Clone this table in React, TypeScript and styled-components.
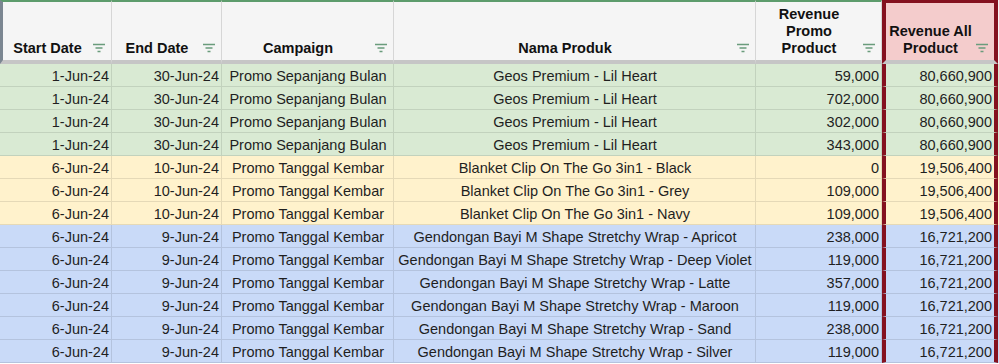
import React from 'react';
import styled, { createGlobalStyle, css } from 'styled-components';

const GlobalStyle = createGlobalStyle`
  html, body {
    margin: 0;
    padding: 0;
    background: #ffffff;
    overflow: hidden;
  }
  body {
    font-family: "Liberation Sans", Arial, sans-serif;
    color: #1f1f1f;
  }
`;

const RED = '#84111f';
const COLS = '112px 110px 172px 362px 126px 116px 1fr';

type Tone = 'green' | 'yellow' | 'blue';

const toneBg: Record<Tone, string> = {
  green: '#d9ead3',
  yellow: '#fff2cc',
  blue: '#c9daf8',
};

interface SaleRow {
  start: string;
  end: string;
  campaign: string;
  produk: string;
  promo: string;
  all: string;
  tone: Tone;
}

const Sheet = styled.div`
  width: 999px;
  height: 364px;
  overflow: hidden;
`;

const Row = styled.div`
  display: grid;
  grid-template-columns: ${COLS};
`;

const HeaderCell = styled.div<{ $accent?: boolean; $first?: boolean }>`
  box-sizing: border-box;
  height: 64px;
  display: flex;
  align-items: flex-end;
  padding-bottom: 3px;
  background: #f5f5f5;
  border-top: 2px solid #5d9c6c;
  border-right: 1px solid #d6d6d6;
  border-bottom: 4px solid #c6c6c6;
  ${(p) =>
    p.$first &&
    css`
      border-left: 3px solid #7b8691;
    `}
  ${(p) =>
    p.$accent &&
    css`
      background: #f4cccc;
      border-top: 3px solid ${RED};
      border-left: 4px solid ${RED};
      border-right: 4px solid ${RED};
    `}
`;

const HeaderLabel = styled.div`
  flex: 1;
  text-align: center;
  font-weight: 700;
  font-size: 14.5px;
  line-height: 17px;
  color: #111;
`;

const FilterIcon = styled.svg`
  flex: none;
  width: 14px;
  height: 10px;
  margin: 0 5px 4px 0;
`;

const Cell = styled.div<{ $tone: Tone; $align: 'left' | 'center' | 'right'; $accent?: boolean }>`
  box-sizing: border-box;
  height: 23px;
  line-height: 20px;
  padding: 2px 2px 0 3px;
  font-size: 14.5px;
  white-space: nowrap;
  overflow: hidden;
  text-align: ${(p) => p.$align};
  background: ${(p) => toneBg[p.$tone]};
  border-right: 1px solid rgba(0, 0, 0, 0.1);
  border-bottom: 1px solid rgba(0, 0, 0, 0.1);
  ${(p) =>
    p.$accent &&
    css`
      border-left: 4px solid ${RED};
      border-right: 4px solid ${RED};
    `}
`;

const Filler = styled.div<{ $tone?: Tone }>`
  background: ${(p) => (p.$tone ? toneBg[p.$tone] : '#f5f5f5')};
`;

const Filter = () => (
  <FilterIcon viewBox="0 0 14 10">
    <path d="M1 1.5h12M3.5 5h7M5.5 8.5h3" stroke="#6a9c7c" strokeWidth="1.3" fill="none" />
  </FilterIcon>
);

const headers = [
  ['Start Date'],
  ['End Date'],
  ['Campaign'],
  ['Nama Produk'],
  ['Revenue', 'Promo', 'Product'],
  ['Revenue All', 'Product'],
];

const geos = 'Geos Premium - Lil Heart';
const blanket = 'Blanket Clip On The Go 3in1 - ';
const wrap = 'Gendongan Bayi M Shape Stretchy Wrap - ';

const rows: SaleRow[] = [
  { start: '1-Jun-24', end: '30-Jun-24', campaign: 'Promo Sepanjang Bulan', produk: geos, promo: '59,000', all: '80,660,900', tone: 'green' },
  { start: '1-Jun-24', end: '30-Jun-24', campaign: 'Promo Sepanjang Bulan', produk: geos, promo: '702,000', all: '80,660,900', tone: 'green' },
  { start: '1-Jun-24', end: '30-Jun-24', campaign: 'Promo Sepanjang Bulan', produk: geos, promo: '302,000', all: '80,660,900', tone: 'green' },
  { start: '1-Jun-24', end: '30-Jun-24', campaign: 'Promo Sepanjang Bulan', produk: geos, promo: '343,000', all: '80,660,900', tone: 'green' },
  { start: '6-Jun-24', end: '10-Jun-24', campaign: 'Promo Tanggal Kembar', produk: blanket + 'Black', promo: '0', all: '19,506,400', tone: 'yellow' },
  { start: '6-Jun-24', end: '10-Jun-24', campaign: 'Promo Tanggal Kembar', produk: blanket + 'Grey', promo: '109,000', all: '19,506,400', tone: 'yellow' },
  { start: '6-Jun-24', end: '10-Jun-24', campaign: 'Promo Tanggal Kembar', produk: blanket + 'Navy', promo: '109,000', all: '19,506,400', tone: 'yellow' },
  { start: '6-Jun-24', end: '9-Jun-24', campaign: 'Promo Tanggal Kembar', produk: wrap + 'Apricot', promo: '238,000', all: '16,721,200', tone: 'blue' },
  { start: '6-Jun-24', end: '9-Jun-24', campaign: 'Promo Tanggal Kembar', produk: wrap + 'Deep Violet', promo: '119,000', all: '16,721,200', tone: 'blue' },
  { start: '6-Jun-24', end: '9-Jun-24', campaign: 'Promo Tanggal Kembar', produk: wrap + 'Latte', promo: '357,000', all: '16,721,200', tone: 'blue' },
  { start: '6-Jun-24', end: '9-Jun-24', campaign: 'Promo Tanggal Kembar', produk: wrap + 'Maroon', promo: '119,000', all: '16,721,200', tone: 'blue' },
  { start: '6-Jun-24', end: '9-Jun-24', campaign: 'Promo Tanggal Kembar', produk: wrap + 'Sand', promo: '238,000', all: '16,721,200', tone: 'blue' },
  { start: '6-Jun-24', end: '9-Jun-24', campaign: 'Promo Tanggal Kembar', produk: wrap + 'Silver', promo: '119,000', all: '16,721,200', tone: 'blue' },
];

export default function App() {
  return (
    <>
      <GlobalStyle />
      <Sheet>
        <Row>
          {headers.map((lines, i) => (
            <HeaderCell key={i} $first={i === 0} $accent={i === 5}>
              <HeaderLabel>
                {lines.map((l) => (
                  <div key={l}>{l}</div>
                ))}
              </HeaderLabel>
              <Filter />
            </HeaderCell>
          ))}
          <Filler />
        </Row>

        {rows.map((r, i) => (
          <Row key={i}>
            <Cell $tone={r.tone} $align="right">{r.start}</Cell>
            <Cell $tone={r.tone} $align="right">{r.end}</Cell>
            <Cell $tone={r.tone} $align="center">{r.campaign}</Cell>
            <Cell $tone={r.tone} $align="center">{r.produk}</Cell>
            <Cell $tone={r.tone} $align="right">{r.promo}</Cell>
            <Cell $tone={r.tone} $align="right" $accent>{r.all}</Cell>
            <Filler $tone={r.tone} />
          </Row>
        ))}
      </Sheet>
    </>
  );
}
